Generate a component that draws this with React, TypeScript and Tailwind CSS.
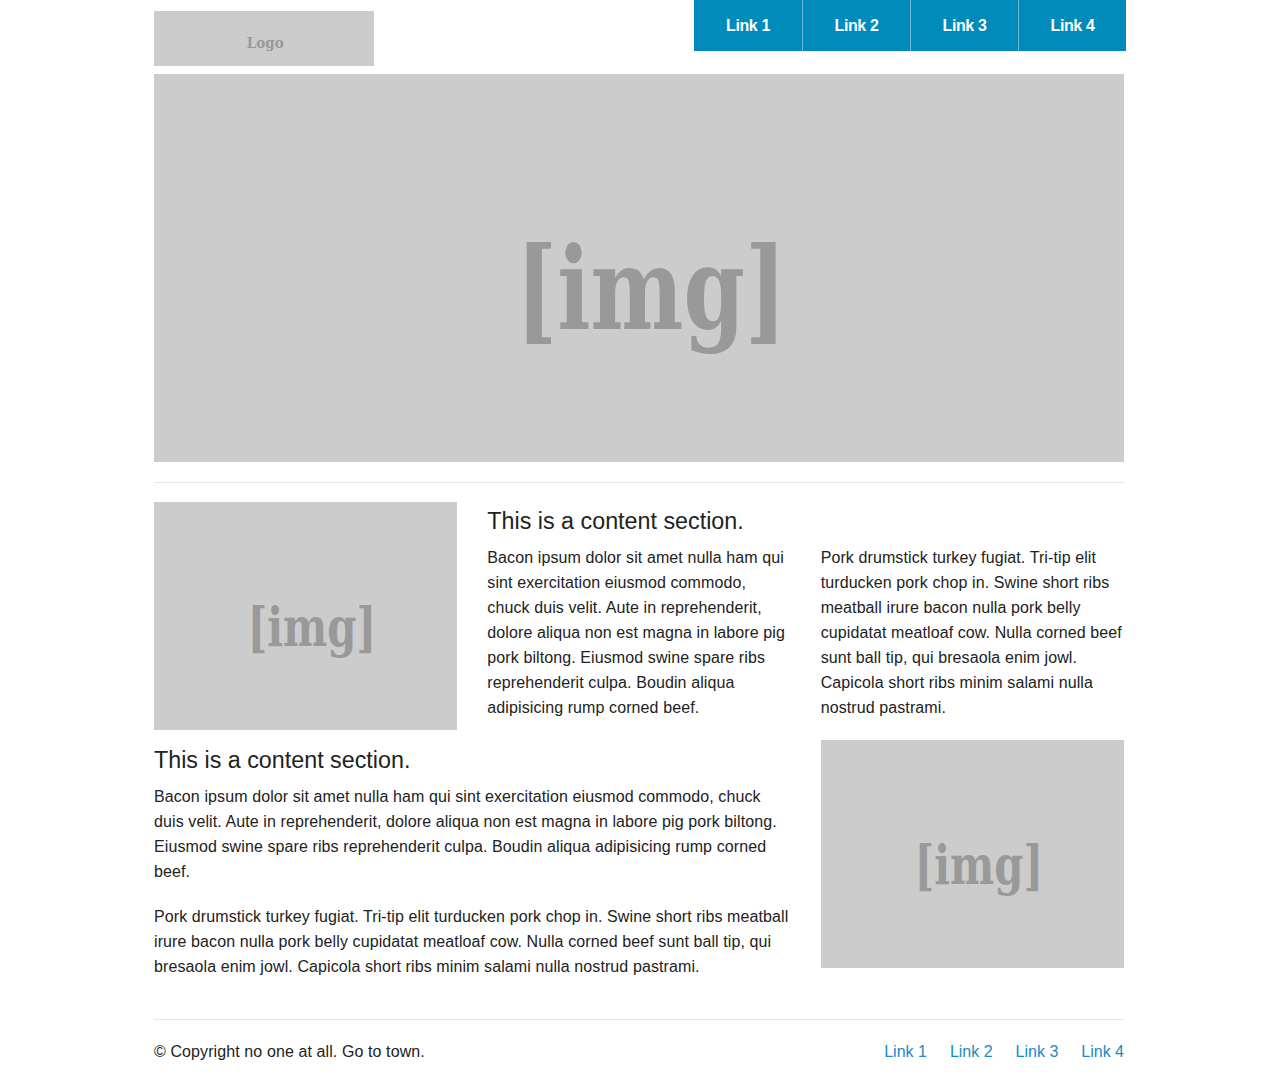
import React from 'react';

const slab: React.CSSProperties = { fontFamily: '"DejaVu Serif", "Liberation Serif", serif' };

const Placeholder: React.FC<{ className: string; textClass: string }> = ({ className, textClass }) => (
  <div className={`bg-[#cccccc] flex items-center justify-center ${className}`}>
    <span className={`text-[#999999] font-bold tracking-normal ${textClass}`} style={slab}>
      [img]
    </span>
  </div>
);

const navLinks = ['Link 1', 'Link 2', 'Link 3', 'Link 4'];

const App: React.FC = () => {
  return (
    <div
      className="min-h-screen bg-white text-[#222222] tracking-[0.1px]"
      style={{ fontFamily: '"Liberation Sans", Arial, sans-serif' }}
    >
      <div className="w-[970px] mx-auto">
        <header className="flex items-start justify-between h-[74px]">
          <div className="mt-[11px] w-[220px] h-[55px] bg-[#cccccc] flex items-center justify-center">
            <span className="text-[#999999] font-bold text-[15px] pt-[9px] pl-[4px] tracking-normal scale-x-[0.9]" style={slab}>
              Logo
            </span>
          </div>
          <nav className="flex bg-[#008bba] h-[51px] mr-[-2px]">
            {navLinks.map((l, i) => (
              <a
                key={l}
                href="#"
                className={`w-[108px] flex items-center justify-center text-white font-bold text-[16px] tracking-[-0.4px] ${
                  i > 0 ? 'border-l border-[#6fbcd8]' : ''
                }`}
              >
                {l}
              </a>
            ))}
          </nav>
        </header>

        <Placeholder className="h-[388px]" textClass="text-[114px] leading-none pt-[42px] pl-[32px] scale-x-[0.77]" />

        <hr className="mt-5 mb-[19px] border-t border-[#e5e5e5]" />

        <div className="grid grid-cols-3 gap-x-[30px] text-[16px] leading-[25px]">
          <Placeholder className="h-[228px]" textClass="text-[55px] leading-none pt-[20px] pl-[16px] scale-x-[0.76]" />
          <div>
            <h2 className="text-[23.3px] leading-[38px] mb-[5px] tracking-normal text-[#222222]">
              This is a content section.
            </h2>
            <p>
              Bacon ipsum dolor sit amet nulla ham qui sint exercitation eiusmod commodo, chuck duis velit. Aute in
              reprehenderit, dolore aliqua non est magna in labore pig pork biltong. Eiusmod swine spare ribs
              reprehenderit culpa. Boudin aliqua adipisicing rump corned beef.
            </p>
          </div>
          <div className="pt-[43px]">
            <p>
              Pork drumstick turkey fugiat. Tri-tip elit turducken pork chop in. Swine short ribs meatball irure bacon
              nulla pork belly cupidatat meatloaf cow. Nulla corned beef sunt ball tip, qui bresaola enim jowl.
              Capicola short ribs minim salami nulla nostrud pastrami.
            </p>
          </div>
        </div>

        <div className="grid grid-cols-3 gap-x-[30px] mt-[10px] text-[16px] leading-[25px]">
          <div className="col-span-2 pt-[1px]">
            <h2 className="text-[23.3px] leading-[38px] mb-[5px] tracking-normal text-[#222222]">
              This is a content section.
            </h2>
            <p className="mb-5">
              Bacon ipsum dolor sit amet nulla ham qui sint exercitation eiusmod commodo, chuck duis velit. Aute in
              reprehenderit, dolore aliqua non est magna in labore pig pork biltong. Eiusmod swine spare ribs
              reprehenderit culpa. Boudin aliqua adipisicing rump corned beef.
            </p>
            <p className="mb-5">
              Pork drumstick turkey fugiat. Tri-tip elit turducken pork chop in. Swine short ribs meatball irure bacon
              nulla pork belly cupidatat meatloaf cow. Nulla corned beef sunt ball tip, qui bresaola enim jowl.
              Capicola short ribs minim salami nulla nostrud pastrami.
            </p>
          </div>
          <Placeholder className="h-[228px]" textClass="text-[55px] leading-none pt-[20px] pl-[16px] scale-x-[0.76]" />
        </div>

        <hr className="mt-5 border-t border-[#e5e5e5]" />

        <footer className="flex items-center justify-between pt-5 pb-5 text-[16px] leading-[24px]">
          <p>© Copyright no one at all. Go to town.</p>
          <div className="flex gap-[23px] tracking-normal">
            {navLinks.map((l) => (
              <a key={l} href="#" className="text-[#1a8ac0]">
                {l}
              </a>
            ))}
          </div>
        </footer>
      </div>
    </div>
  );
};

export default App;
